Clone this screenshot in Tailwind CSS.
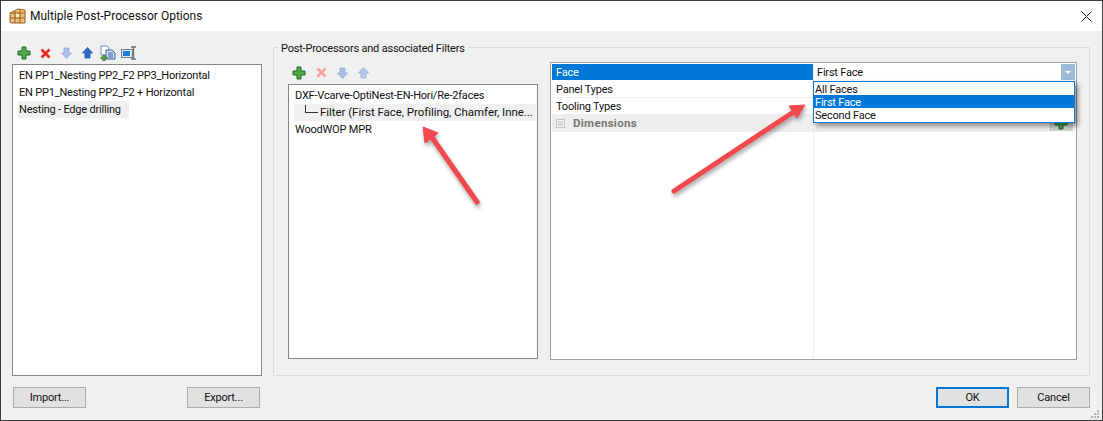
<!DOCTYPE html>
<html lang="en">
<head>
    <meta charset="UTF-8">
    <title>Multiple Post-Processor Options</title>
    <script src="https://cdn.jsdelivr.net/npm/@tailwindcss/browser@4"></script>
</head>
<body class="bg-[#f0f0f0] overflow-hidden">
<div class="relative w-[1103px] h-[421px] flex flex-col border border-[#3c3c3c] bg-[#f0f0f0] text-[11px] tracking-[-0.2px] text-[#111] font-['Roboto','Noto_Sans',sans-serif] leading-[17px]">
    <!-- Title bar -->
    <div class="h-[30px] bg-white flex items-center shrink-0">
        <svg class="ml-[8px] w-[17px] h-[17px]" viewBox="0 0 17 17">
            <path d="M1 5 L9 1 L16 2 V15 H2 L1 14 Z" fill="#e9c27c" stroke="#9a5c1e"/>
            <path d="M1 5 H16 M1 10 H16 M6 3 V15 M11 2 V15" stroke="#9a5c1e" fill="none"/>
            <rect x="7" y="6" width="3" height="3" fill="#fff4c8"/>
        </svg>
        <span class="ml-[4px] text-[12px] tracking-normal">Multiple Post-Processor Options</span>
        <svg class="ml-auto mr-[10px] w-[11px] h-[11px]" viewBox="0 0 11 11"><path d="M0.5 0.5 L10.5 10.5 M10.5 0.5 L0.5 10.5" stroke="#222" fill="none"/></svg>
    </div>

    <!-- Main area -->
    <div class="h-[345px] shrink-0 flex pl-[11px] pr-[12px] gap-[11px]">
        <!-- Left column -->
        <div class="w-[250px] flex flex-col pt-[13px]">
            <div class="h-[20px] flex items-center pl-[5px] pb-[2px] gap-[9px]">
                <svg class="w-[14px] h-[14px]" viewBox="0 0 14 14"><path d="M5 1 H9 V5 H13 V9 H9 V13 H5 V9 H1 V5 H5 Z" fill="#4fa84a" stroke="#1f6b22"/></svg>
                <svg class="w-[11px] h-[11px]" viewBox="0 0 11 11"><path d="M1.5 1.5 L9.5 9.5 M9.5 1.5 L1.5 9.5" stroke="#e02a1c" stroke-width="2.6" fill="none"/></svg>
                <svg class="w-[11px] h-[12px] ml-[1px]" viewBox="0 0 11 12"><path d="M3 1 H8 V6 H10.5 L5.5 11.5 L0.5 6 H3 Z" fill="#a9bfe6" stroke="#8ca6d6" stroke-width="0.7"/></svg>
                <svg class="w-[11px] h-[12px] ml-[1px]" viewBox="0 0 11 12"><path d="M3 11 H8 V6 H10.5 L5.5 0.5 L0.5 6 H3 Z" fill="#2a6fd0" stroke="#134a9a" stroke-width="0.7"/></svg>
                <svg class="w-[16px] h-[16px] -ml-[2px]" viewBox="0 0 16 16">
                    <path d="M1 1 H7 L9 3 V10 H1 Z" fill="#fff" stroke="#6f8fbf"/>
                    <path d="M6 5 H12 L15 8 V14 H6 Z" fill="#cfe0f5" stroke="#34639f"/>
                    <path d="M8 8 H13 M8 10 H13 M8 12 H13" stroke="#34639f"/>
                    <path d="M3 10 H5 V12 H7 V14 H5 V16 H3 V14 H1 V12 H3 Z" fill="#56a84e" stroke="#2a6b2a" stroke-width="0.6"/>
                </svg>
                <svg class="w-[16px] h-[14px] -ml-[4px]" viewBox="0 0 16 14">
                    <rect x="0.5" y="3.5" width="11" height="8" fill="#dfe7f0" stroke="#6d7f93"/>
                    <rect x="2" y="5" width="7" height="5" fill="#1a7fe0"/>
                    <path d="M10 1 H15 M10 13 H15 M12.5 1 V13" stroke="#6f6f6f" stroke-width="1.3" fill="none"/>
                </svg>
            </div>
            <div class="h-[312px] bg-white border border-[#82858c] pl-[5px] pt-[2px]">
                <div class="h-[17px] pl-[1px] whitespace-nowrap">EN PP1_Nesting PP2_F2 PP3_Horizontal</div>
                <div class="h-[17px] pl-[1px] whitespace-nowrap">EN PP1_Nesting PP2_F2 + Horizontal</div>
                <div class="h-[17px] pl-[1px] w-[111px] bg-[#f0f0f0] whitespace-nowrap">Nesting - Edge drilling</div>
            </div>
        </div>

        <!-- Group box -->
        <div class="relative mt-[16px] w-[817px] h-[329px] border border-[#dcdcdc] flex pl-[14px] pr-[12px] gap-[12px]">
            <div class="absolute -top-[8px] left-[4px] px-[3px] bg-[#f0f0f0] whitespace-nowrap">Post-Processors and associated Filters</div>
            <div class="w-[250px] flex flex-col pt-[16px]">
                <div class="h-[20px] flex items-center pl-[4px] pb-[3px] gap-[10px]">
                    <svg class="w-[14px] h-[14px]" viewBox="0 0 14 14"><path d="M5 1 H9 V5 H13 V9 H9 V13 H5 V9 H1 V5 H5 Z" fill="#4fa84a" stroke="#1f6b22"/></svg>
                    <svg class="w-[11px] h-[11px]" viewBox="0 0 11 11"><path d="M1.5 1.5 L9.5 9.5 M9.5 1.5 L1.5 9.5" stroke="#f3a49c" stroke-width="2.6" fill="none"/></svg>
                    <svg class="w-[11px] h-[12px]" viewBox="0 0 11 12"><path d="M3 1 H8 V6 H10.5 L5.5 11.5 L0.5 6 H3 Z" fill="#a9bfe6" stroke="#8ca6d6" stroke-width="0.7"/></svg>
                    <svg class="w-[11px] h-[12px]" viewBox="0 0 11 12"><path d="M3 11 H8 V6 H10.5 L5.5 0.5 L0.5 6 H3 Z" fill="#b4c8ea" stroke="#8ca6d6" stroke-width="0.7"/></svg>
                </div>
                <div class="h-[275px] bg-white border border-[#82858c] pl-[5px] pt-[2px]">
                    <div class="h-[17px] pl-[1px] whitespace-nowrap">DXF-Vcarve-OptiNest-EN-Hori/Re-2faces</div>
                    <div class="relative h-[17px] pl-[26px] mr-[1px] bg-[#f0f0f0] whitespace-nowrap text-[11.5px] tracking-[-0.05px]">
                        <span class="absolute left-[11px] top-[1px] w-[13px] h-[8px] border-l border-b border-[#333]"></span>Filter (First Face, Profiling, Chamfer, Inne...
                    </div>
                    <div class="h-[17px] pl-[1px] whitespace-nowrap">WoodWOP MPR</div>
                </div>
            </div>
            <div class="mt-[14px] w-[527px] h-[298px] bg-white border border-[#a0a0a0] p-[1px] flex">
                <div class="w-[262px] border-r border-[#ececec] shrink-0 leading-[18px]">
                    <div class="h-[16px] bg-[#0078d7] text-white pl-[4px]">Face</div>
                    <div class="h-[18px] border-b border-[#eeeeee] pl-[4px] pt-[1px] leading-[17px]">Panel Types</div>
                    <div class="h-[16px] pl-[4px]">Tooling Types</div>
                    <div class="h-[18px] bg-[#eeeeee] flex items-center pl-[4px] gap-[8px] text-[#777] font-bold text-[11.5px] tracking-[0.3px]">
                        <span class="w-[9px] h-[9px] border border-[#c4c4c4] bg-[#d8d8d8] shadow-[inset_0_0_0_1px_#f5f5f5]"></span>Dimensions
                    </div>
                </div>
                <div class="flex-1 min-w-0">
                    <div class="h-[16px] flex items-center pl-[3px]"><span class="pt-[1px]">First Face</span>
                        <span class="ml-auto w-[14px] h-[16px] bg-[#9dbad6] flex items-center justify-center">
                            <span class="w-0 h-0 border-x-[3px] border-x-transparent border-t-[3px] border-t-white"></span>
                        </span>
                    </div>
                    <div class="h-[34px] border-b border-[#eeeeee]"></div>
                    <div class="h-[18px] bg-[#eeeeee] flex justify-end pr-[1px]">
                        <span class="relative w-[26px] h-[18px] bg-[#d2d2d2] border border-white flex items-center justify-center overflow-hidden">
                            <svg class="w-[14px] h-[14px]" viewBox="0 0 14 14"><path d="M5 1 H9 V5 H13 V9 H9 V13 H5 V9 H1 V5 H5 Z" fill="#4fa84a" stroke="#1f6b22"/></svg>
                        </span>
                    </div>
                </div>
            </div>
        </div>
    </div>

    <!-- Buttons -->
    <div class="h-[44px] shrink-0 flex pl-[12px] pr-[12px] pt-[11px]">
        <div class="w-[73px] h-[21px] bg-[#e1e1e1] border border-[#adadad] flex items-center justify-center">Import...</div>
        <div class="ml-[101px] w-[73px] h-[21px] bg-[#e1e1e1] border border-[#adadad] flex items-center justify-center">Export...</div>
        <div class="ml-auto w-[73px] h-[21px] bg-[#e1e1e1] border-2 border-[#0078d7] flex items-center justify-center">OK</div>
        <div class="ml-[8px] w-[73px] h-[21px] bg-[#e1e1e1] border border-[#adadad] flex items-center justify-center">Cancel</div>
    </div>

    <!-- Resize grip -->
    <svg class="absolute right-[2px] bottom-[1px] w-[9px] h-[9px]" viewBox="0 0 9 9">
        <path d="M6 0 h2 v2 h-2 Z M3 3 h2 v2 h-2 Z M6 3 h2 v2 h-2 Z M0 6 h2 v2 h-2 Z M3 6 h2 v2 h-2 Z M6 6 h2 v2 h-2 Z" fill="#b5b5b5"/>
    </svg>

    <!-- Combo dropdown -->
    <div class="absolute left-[812px] top-[80px] w-[262px] h-[42px] bg-white border border-[#0078d7] shadow-[3px_3px_5px_rgba(0,0,0,0.45)] leading-[15px]">
        <div class="h-[13px] pl-[1px]">All Faces</div>
        <div class="h-[13px] pl-[1px] bg-[#0078d7] text-white">First Face</div>
        <div class="h-[13px] pl-[1px]">Second Face</div>
    </div>

    <!-- Annotation arrows -->
    <svg class="absolute left-[-1px] top-[-1px] w-[1103px] h-[421px] pointer-events-none drop-shadow-[1px_3px_2px_rgba(0,0,0,0.35)]" viewBox="0 0 1103 421">
        <path d="M477 202 L431 136" stroke="#f2484e" stroke-width="5" stroke-linecap="round" fill="none"/>
        <path d="M423 127 L438 133 L425 143 Z" fill="#f2484e" stroke="#f2484e" stroke-linejoin="round"/>
        <path d="M674 191 L795 111" stroke="#f2484e" stroke-width="5" stroke-linecap="round" fill="none"/>
        <path d="M805 105 L789 106 L797 118 Z" fill="#f2484e" stroke="#f2484e" stroke-linejoin="round"/>
    </svg>
</div>
</body>
</html>
